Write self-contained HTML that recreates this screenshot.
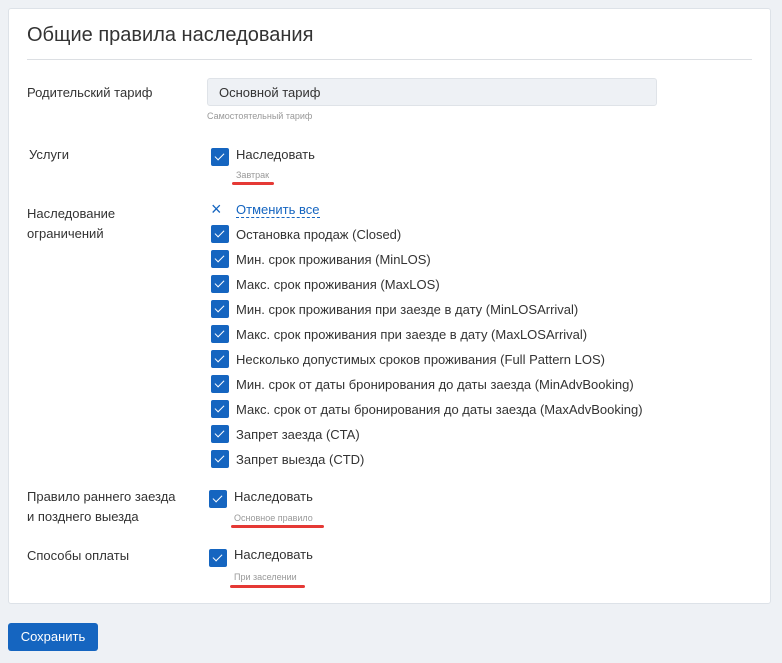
<!DOCTYPE html>
<html><head><meta charset="utf-8"><style>
*{margin:0;padding:0;box-sizing:border-box}
body{width:782px;height:663px;background:#eef1f5;font-family:"Liberation Sans",sans-serif;color:#333;position:relative;overflow:hidden}
.card{position:absolute;left:8px;top:8px;width:763px;height:596px;background:#fff;border:1px solid #dde2e8;border-radius:3px}
.a{position:absolute;white-space:nowrap}
.t{font-size:20px;color:#333;left:27px;top:24px}
.hr{position:absolute;left:27px;top:59px;width:725px;height:1px;background:#dcdfe3}
.l{font-size:13px;color:#333;left:27px;line-height:20px}
.cb{position:absolute;width:18px;height:18px;background:#1565c0;border-radius:2px}
.cb::after{content:"";position:absolute;left:6px;top:3px;width:4px;height:8px;border:solid #fff;border-width:0 1.5px 1.5px 0;transform:rotate(45deg)}
.ct{font-size:13px;color:#333}
.s{font-size:9px;color:#999}
.red{position:absolute;height:3px;background:#e53935;border-radius:2px}
.inp{position:absolute;left:207px;top:78px;width:450px;height:28px;background:#eef1f5;border:1px solid #dfe3e8;border-radius:3px;font-size:13px;padding:6px 11px;color:#333}
.btn{position:absolute;left:8px;top:623px;width:90px;height:28px;background:#1565c0;border-radius:3px;color:#fff;font-size:13px;text-align:center;line-height:28px}
</style></head><body>
<div class="card"></div>
<div class="a t">Общие правила наследования</div>
<div class="hr"></div>
<div class="a l" style="top:83px">Родительский тариф</div>
<div class="inp">Основной тариф</div>
<div class="a s" style="left:207px;top:111px">Самостоятельный тариф</div>

<div class="a l" style="top:145px;left:29px">Услуги</div>
<div class="cb" style="left:211px;top:148px"></div>
<div class="a ct" style="left:236px;top:147px">Наследовать</div>
<div class="a s" style="left:236px;top:170px">Завтрак</div>
<div class="red" style="left:232px;top:182px;width:42px"></div>

<div class="a l" style="top:204px">Наследование<br>ограничений</div>
<div class="a" style="left:211px;top:199px;font-size:18px;color:#1565c0">×</div>
<div class="a ct" style="left:236px;top:202px;color:#1565c0;border-bottom:1px dashed #1565c0;line-height:15px">Отменить все</div>

<div class="cb" style="left:211px;top:225px"></div><div class="a ct" style="left:236px;top:227px">Остановка продаж (Closed)</div>
<div class="cb" style="left:211px;top:250px"></div><div class="a ct" style="left:236px;top:252px">Мин. срок проживания (MinLOS)</div>
<div class="cb" style="left:211px;top:275px"></div><div class="a ct" style="left:236px;top:277px">Макс. срок проживания (MaxLOS)</div>
<div class="cb" style="left:211px;top:300px"></div><div class="a ct" style="left:236px;top:302px">Мин. срок проживания при заезде в дату (MinLOSArrival)</div>
<div class="cb" style="left:211px;top:325px"></div><div class="a ct" style="left:236px;top:327px">Макс. срок проживания при заезде в дату (MaxLOSArrival)</div>
<div class="cb" style="left:211px;top:350px"></div><div class="a ct" style="left:236px;top:352px">Несколько допустимых сроков проживания (Full Pattern LOS)</div>
<div class="cb" style="left:211px;top:375px"></div><div class="a ct" style="left:236px;top:377px">Мин. срок от даты бронирования до даты заезда (MinAdvBooking)</div>
<div class="cb" style="left:211px;top:400px"></div><div class="a ct" style="left:236px;top:402px">Макс. срок от даты бронирования до даты заезда (MaxAdvBooking)</div>
<div class="cb" style="left:211px;top:425px"></div><div class="a ct" style="left:236px;top:427px">Запрет заезда (CTA)</div>
<div class="cb" style="left:211px;top:450px"></div><div class="a ct" style="left:236px;top:452px">Запрет выезда (CTD)</div>

<div class="a l" style="top:487px">Правило раннего заезда<br>и позднего выезда</div>
<div class="cb" style="left:209px;top:490px"></div>
<div class="a ct" style="left:234px;top:489px">Наследовать</div>
<div class="a s" style="left:234px;top:513px">Основное правило</div>
<div class="red" style="left:231px;top:525px;width:93px"></div>

<div class="a l" style="top:546px">Способы оплаты</div>
<div class="cb" style="left:209px;top:549px"></div>
<div class="a ct" style="left:234px;top:547px">Наследовать</div>
<div class="a s" style="left:234px;top:572px">При заселении</div>
<div class="red" style="left:230px;top:585px;width:75px"></div>

<div class="btn">Сохранить</div>
</body></html>
